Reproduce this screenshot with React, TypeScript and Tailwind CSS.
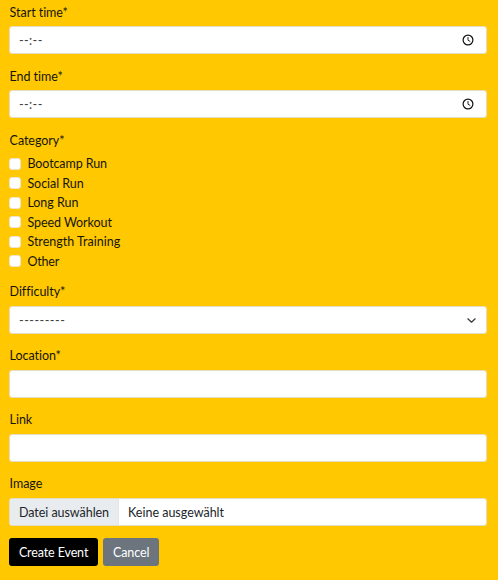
import type { ReactNode } from "react";

const categories = [
  { name: "Bootcamp Run", spacing: "tracking-[-0.1px]" },
  { name: "Social Run", spacing: "tracking-[-0.04px]" },
  { name: "Long Run", spacing: "tracking-[-0.04px]" },
  { name: "Speed Workout", spacing: "tracking-[-0.06px]" },
  { name: "Strength Training", spacing: "tracking-[0px]" },
  { name: "Other", spacing: "tracking-[-0.2px]" },
];

const control =
  "flex h-[28px] w-full items-center rounded-[3px] border border-[#e3dcc0] bg-white px-[9px] text-[#212529]";

function Field({ label, children }: { label: string; children?: ReactNode }) {
  return (
    <div className="mb-3">
      <div className="mb-[5px] box-content h-[18px] pt-px pl-[0.6px] tracking-[-0.05px]">{label}</div>
      {children}
    </div>
  );
}

function Clock() {
  return (
    <svg className="mr-[3px] ml-auto size-[12px]" viewBox="0 0 12 12" fill="none" stroke="#111" strokeWidth="1.2">
      <circle cx="6" cy="6" r="4.9" />
      <path d="M6 3v3.2l2.3 1.4" strokeWidth="0.9" />
    </svg>
  );
}

function TimeField({ label }: { label: string }) {
  return (
    <div className="mb-3">
      <div className="mb-[4px] box-content h-[18px] pt-[2px] pl-[0.6px] tracking-[-0.05px]">{label}</div>
      <div className={control}>
        <span className="pt-[2px] tracking-[0.4px] text-[#3b3f43]">--:--</span>
        <Clock />
      </div>
    </div>
  );
}

export default function App() {
  return (
    <form className="h-[580px] w-[498px] bg-[#ffc800] pt-[2px] pr-[11px] pl-[9px] font-['Lato','Noto_Sans',sans-serif] text-[12.5px] leading-[18px] text-[#16150c]">
      <TimeField label="Start time*" />
      <TimeField label="End time*" />
      <div className="mb-[12px] pt-[2px]">
        <div className="mb-[4.5px] h-[18px] pl-[0.6px] tracking-[-0.05px]">Category*</div>
        {categories.map((c) => (
          <label key={c.name} className="mb-[1.5px] flex h-[18px] items-center">
            <span className="mr-[6px] ml-[0.4px] size-[12px] rounded-[3px] border border-[#ebe5cf] bg-white" />
            <span className={`pt-px ${c.spacing}`}>{c.name}</span>
          </label>
        ))}
      </div>
      <Field label="Difficulty*">
        <div className={control}>
          <span className="pt-px tracking-[0.5px] text-[#3b3f43]">---------</span>
          <svg className="mr-[1.5px] ml-auto size-[9px]" viewBox="0 0 16 16" fill="none" stroke="#343a40" strokeWidth="2.2" strokeLinecap="round" strokeLinejoin="round">
            <path d="m1.5 5 6.5 6 6.5-6" />
          </svg>
        </div>
      </Field>
      <Field label="Location*"><div className={control} /></Field>
      <Field label="Link"><div className={control} /></Field>
      <Field label="Image">
        <div className="flex h-[28px] overflow-hidden rounded-[3px] border border-[#e3dcc0] bg-white leading-[27px] text-[#212529]">
          <span className="w-[109px] border-r border-[#e3e6e9] bg-[#e9ecef] pl-[9px] tracking-[-0.05px]">Datei auswählen</span>
          <span className="pl-[9px]">Keine ausgewählt</span>
        </div>
      </Field>
      <div className="flex gap-[5.5px] pl-[0.4px] leading-[29px] tracking-[-0.12px] text-white">
        <button type="button" className="h-[28px] w-[88.4px] rounded-[3px] bg-black">Create Event</button>
        <button type="button" className="h-[28px] w-[55.7px] rounded-[3px] bg-[#6c757d]">Cancel</button>
      </div>
    </form>
  );
}
